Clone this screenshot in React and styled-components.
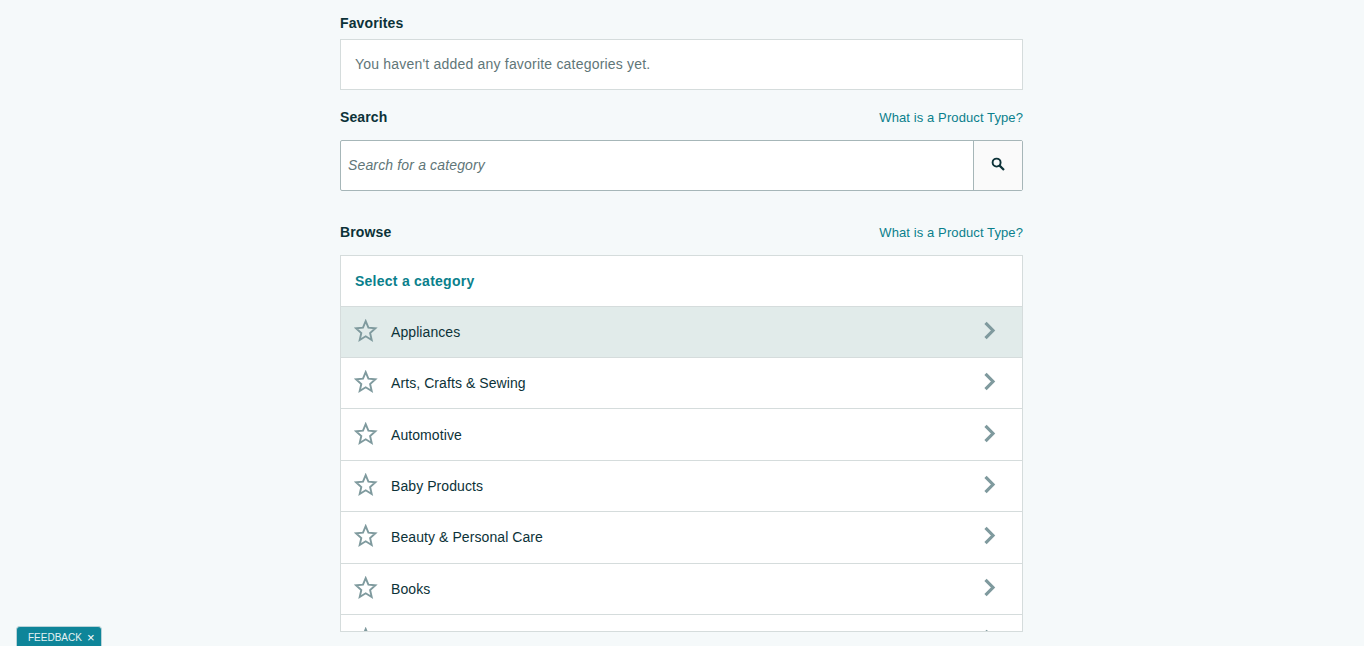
import React from 'react';
import styled, { createGlobalStyle } from 'styled-components';

const GlobalStyle = createGlobalStyle`
  html, body {
    margin: 0;
    height: 100%;
    overflow: hidden;
    background: #f5f9fa;
    font-family: "Liberation Sans", Arial, sans-serif;
    color: #0c3238;
  }
`;

const Page = styled.main`
  width: 683px;
  margin-left: calc(50% - 342px);
  padding-top: 14px;
`;

const SectionHead = styled.div`
  display: flex;
  justify-content: space-between;
  align-items: center;
  height: 18px;
  margin-top: ${({ $top }) => $top || 0}px;
  margin-bottom: ${({ $bottom }) => $bottom || 0}px;
`;

const Label = styled.h2`
  margin: 0;
  font-size: 14px;
  font-weight: 700;
  letter-spacing: 0.12px;
  color: #0c3238;
`;

const HelpLink = styled.a`
  font-size: 13px;
  letter-spacing: 0.1px;
  color: #0a7f8c;
  text-decoration: none;
`;

const EmptyCard = styled.div`
  box-sizing: border-box;
  height: 51px;
  display: flex;
  align-items: center;
  padding: 0 14px 2px;
  background: #fff;
  border: 1px solid #d5dcdc;
  font-size: 14px;
  letter-spacing: 0.2px;
  color: #5f7678;
`;

const SearchBar = styled.form`
  display: flex;
  box-sizing: border-box;
  height: 51px;
  background: #fff;
  border: 1px solid #a6b6b8;
  border-radius: 2px;
`;

const SearchInput = styled.input`
  flex: 1;
  min-width: 0;
  border: 0;
  outline: 0;
  padding: 0 7px 2px;
  background: transparent;
  font: italic 14px "Liberation Sans", Arial, sans-serif;
  letter-spacing: 0.15px;
  color: #0c3238;

  &::placeholder {
    color: #5f7678;
    opacity: 1;
  }
`;

const SearchButton = styled.button`
  width: 49px;
  padding: 0 0 3px;
  display: flex;
  align-items: center;
  justify-content: center;
  border: 0;
  border-left: 1px solid #a6b6b8;
  background: #fafafa;
`;

const BrowseBox = styled.section`
  box-sizing: border-box;
  height: 377px;
  overflow: hidden;
  background: #fff;
  border: 1px solid #d5dcdc;
`;

const BoxTitle = styled.h3`
  box-sizing: border-box;
  height: 50.6px;
  margin: 0;
  padding: 0 14px;
  display: flex;
  align-items: center;
  border-bottom: 1px solid #d5dcdc;
  font-size: 14px;
  font-weight: 700;
  letter-spacing: 0.25px;
  color: #0a7f8c;
`;

const CategoryRow = styled.div`
  box-sizing: border-box;
  height: 51.4px;
  display: flex;
  align-items: center;
  padding: 0 24px 2px 13px;
  background: ${({ $active }) => ($active ? '#e1ebea' : '#fff')};
  border-bottom: 1px solid #d5dcdc;
`;

const CategoryName = styled.span`
  flex: 1;
  margin: 2px 0 0 13px;
  font-size: 14px;
  letter-spacing: 0.08px;
  color: #0c3238;
`;

const categories = [
  'Appliances',
  'Arts, Crafts & Sewing',
  'Automotive',
  'Baby Products',
  'Beauty & Personal Care',
  'Books',
  '',
];

const SearchIcon = () => (
  <svg width="16" height="16" viewBox="0 0 16 16" fill="none" stroke="#0c3238" strokeWidth="1.9">
    <circle cx="6.6" cy="6.6" r="4" />
    <path d="M9.6 9.6 14 14" strokeWidth="2.2" />
  </svg>
);

const StarIcon = () => (
  <svg width="24" height="24" viewBox="0 0 24 24" fill="none" stroke="#7f9a9e" strokeWidth="1.9">
    <path d="M11.700 2.100l2.700 6.600 7 .6-5.300 4.700 1.600 7-6-3.700-6 3.700 1.600-7L2 9.300l7-.6z" />
  </svg>
);

const ChevronIcon = () => (
  <svg width="16" height="20" viewBox="0 0 16 20" fill="none" stroke="#7f9a9e" strokeWidth="3.200">
    <path d="M3.500 1.800 11 9.500 3.500 17.200" />
  </svg>
);

const FeedbackTab = styled.div`
  position: fixed;
  left: 16px;
  top: 625.500px;
  box-sizing: border-box;
  width: 85.500px;
  height: 24px;
  padding: 5px 0 0 11px;
  display: flex;
  gap: 5px;
  background: #0e8599;
  border: 1px solid #b9d3d8;
  border-bottom: 0;
  border-radius: 4px 4px 0 0;
  font-size: 10px;
  line-height: 11px;
  color: #e5f2f4;
`;

const FeedbackClose = styled.span`
  font-size: 13px;
  line-height: 12px;
  color: #fff;
`;

export default function App() {
  return (
    <>
      <GlobalStyle />
      <Page>
        <SectionHead $bottom={7}>
          <Label>Favorites</Label>
        </SectionHead>
        <EmptyCard>You haven't added any favorite categories yet.</EmptyCard>

        <SectionHead $top={18} $bottom={14}>
          <Label>Search</Label>
          <HelpLink href="#">What is a Product Type?</HelpLink>
        </SectionHead>
        <SearchBar onSubmit={(e) => e.preventDefault()}>
          <SearchInput placeholder="Search for a category" />
          <SearchButton type="button" aria-label="Search">
            <SearchIcon />
          </SearchButton>
        </SearchBar>

        <SectionHead $top={32} $bottom={14}>
          <Label>Browse</Label>
          <HelpLink href="#">What is a Product Type?</HelpLink>
        </SectionHead>
        <BrowseBox>
          <BoxTitle>Select a category</BoxTitle>
          {categories.map((name, i) => (
            <CategoryRow key={name || i} $active={i === 0}>
              <StarIcon />
              <CategoryName>{name}</CategoryName>
              <ChevronIcon />
            </CategoryRow>
          ))}
        </BrowseBox>
      </Page>
      <FeedbackTab>
        FEEDBACK
        <FeedbackClose>×</FeedbackClose>
      </FeedbackTab>
    </>
  );
}
